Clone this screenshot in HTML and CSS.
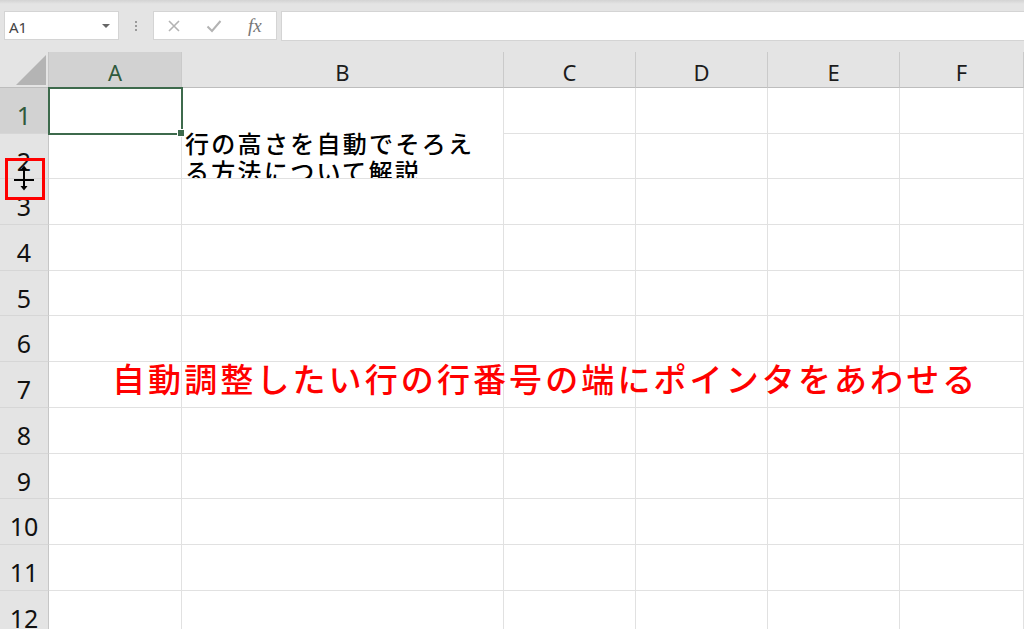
FILE: index.html
```html
<!DOCTYPE html>
<html lang="ja">
<head>
    <meta charset="UTF-8">
    <meta name="viewport" content="width=device-width, initial-scale=1.0">
    <title>行の高さを自動調整</title>
    <link rel="stylesheet" href="styles.css">
</head>
<body>
    <div class="toolbar">
        <div class="name-box">
            <span class="name-text">A1</span>
            <span class="name-arrow"></span>
        </div>
        <div class="grip">
            <span></span><span></span><span></span>
        </div>
        <div class="fx-buttons">
            <svg class="fx-icon" width="14" height="14" viewBox="0 0 14 14">
                <path d="M2 2 L12 12 M12 2 L2 12" stroke="#b3b3b3" stroke-width="1.6" fill="none"/>
            </svg>
            <svg class="fx-icon" width="16" height="14" viewBox="0 0 16 14">
                <path d="M1.5 7.5 L6 12 L14.5 2" stroke="#b3b3b3" stroke-width="2" fill="none"/>
            </svg>
            <span class="fx-label">fx</span>
        </div>
        <div class="formula-input"></div>
    </div>

    <div class="sheet">
        <div class="corner"><span class="corner-tri"></span></div>
        <div class="col-head selected">A</div>
        <div class="col-head">B</div>
        <div class="col-head">C</div>
        <div class="col-head">D</div>
        <div class="col-head">E</div>
        <div class="col-head">F</div>

        <div class="row-head selected">1</div>
        <div class="cell active"></div>
        <div class="cell"></div><div class="cell"></div><div class="cell"></div><div class="cell"></div><div class="cell"></div>

        <div class="row-head">2</div>
        <div class="cell"></div>
        <div class="cell wrap-text">行の高さを自動でそろえる方法について解説</div>
        <div class="cell"></div><div class="cell"></div><div class="cell"></div><div class="cell"></div>

        <div class="row-head">3</div>
        <div class="cell"></div><div class="cell"></div><div class="cell"></div><div class="cell"></div><div class="cell"></div><div class="cell"></div>
        <div class="row-head">4</div>
        <div class="cell"></div><div class="cell"></div><div class="cell"></div><div class="cell"></div><div class="cell"></div><div class="cell"></div>
        <div class="row-head">5</div>
        <div class="cell"></div><div class="cell"></div><div class="cell"></div><div class="cell"></div><div class="cell"></div><div class="cell"></div>
        <div class="row-head">6</div>
        <div class="cell"></div><div class="cell"></div><div class="cell"></div><div class="cell"></div><div class="cell"></div><div class="cell"></div>
        <div class="row-head">7</div>
        <div class="cell"></div><div class="cell"></div><div class="cell"></div><div class="cell"></div><div class="cell"></div><div class="cell"></div>
        <div class="row-head">8</div>
        <div class="cell"></div><div class="cell"></div><div class="cell"></div><div class="cell"></div><div class="cell"></div><div class="cell"></div>
        <div class="row-head">9</div>
        <div class="cell"></div><div class="cell"></div><div class="cell"></div><div class="cell"></div><div class="cell"></div><div class="cell"></div>
        <div class="row-head">10</div>
        <div class="cell"></div><div class="cell"></div><div class="cell"></div><div class="cell"></div><div class="cell"></div><div class="cell"></div>
        <div class="row-head">11</div>
        <div class="cell"></div><div class="cell"></div><div class="cell"></div><div class="cell"></div><div class="cell"></div><div class="cell"></div>
        <div class="row-head">12</div>
        <div class="cell"></div><div class="cell"></div><div class="cell"></div><div class="cell"></div><div class="cell"></div><div class="cell"></div>

        <!-- annotation layer -->
        <div class="pointer-box"></div>
        <svg class="resize-cursor" width="24" height="30" viewBox="0 0 24 30">
            <path d="M2 16 H22" stroke="#000" stroke-width="2"/>
            <path d="M12 3 V25" stroke="#000" stroke-width="2"/>
            <path d="M8.5 6 L12 1.5 L15.5 6 Z" fill="#000"/>
            <path d="M8.5 22 L12 26.5 L15.5 22 Z" fill="#000"/>
        </svg>
        <div class="note">自動調整したい行の行番号の端にポインタをあわせる</div>
    </div>
</body>
</html>
```

FILE: styles.css
```css
* {
    margin: 0;
    padding: 0;
    box-sizing: border-box;
}

body {
    font-family: "Noto Sans", "Noto Sans CJK JP", sans-serif;
    background: #ffffff;
    overflow: hidden;
    width: 1024px;
    height: 629px;
}

/* formula bar */
.toolbar {
    height: 52px;
    display: flex;
    align-items: flex-start;
    padding: 11px 0 0 4px;
    background: linear-gradient(#d3d3d3, #e4e4e4 4px);
}

.name-box {
    width: 115px;
    height: 29px;
    background: #ffffff;
    border: 1px solid #d4d4d4;
    display: flex;
    align-items: center;
    justify-content: space-between;
    padding: 0 8px 0 4px;
}

.name-text {
    font-size: 15px;
    color: #444;
    padding-top: 3px;
}

.name-arrow {
    width: 0;
    height: 0;
    border-left: 4px solid transparent;
    border-right: 4px solid transparent;
    border-top: 4px solid #666;
}

.grip {
    width: 34px;
    height: 29px;
    display: flex;
    flex-direction: column;
    align-items: center;
    justify-content: center;
    gap: 2px;
}

.grip span {
    width: 2px;
    height: 2px;
    background: #9a9a9a;
}

.fx-buttons {
    width: 124px;
    height: 29px;
    background: #ffffff;
    border: 1px solid #d4d4d4;
    display: flex;
    align-items: center;
    padding-left: 13px;
    gap: 25px;
}

.fx-label {
    font-family: "Liberation Serif", serif;
    font-style: italic;
    font-size: 19px;
    color: #777;
    margin-left: 1px;
}

.formula-input {
    flex: 1;
    height: 30px;
    margin-left: 4px;
    background: #ffffff;
    border: 1px solid #d4d4d4;
    border-right: none;
}

/* sheet grid */
.sheet {
    position: relative;
    display: grid;
    grid-template-columns: 49px 133px 322px 132px 132px 132px 124px;
    grid-template-rows: 36px repeat(12, 45.7px);
}

.corner {
    background: #e4e4e4;
    border-right: 1px solid #c6c6c6;
    border-bottom: 1px solid #bdbdbd;
    position: relative;
}

.corner-tri {
    position: absolute;
    right: 2px;
    bottom: 2px;
    width: 0;
    height: 0;
    border-left: 30px solid transparent;
    border-bottom: 30px solid #b4b4b4;
}

.col-head {
    background: #e4e4e4;
    border-right: 1px solid #cacaca;
    border-bottom: 1px solid #bdbdbd;
    font-size: 22px;
    color: #1c1c1c;
    display: flex;
    align-items: center;
    justify-content: center;
    padding-top: 4px;
}

.row-head {
    background: #e4e4e4;
    border-right: 1px solid #c6c6c6;
    border-bottom: 1px solid #d6d6d6;
    font-size: 25px;
    color: #111;
    text-align: center;
    line-height: 1;
    padding-top: 15px;
}

.col-head.selected,
.row-head.selected {
    background: #d2d2d2;
    color: #2f5a3d;
}

.cell {
    border-right: 1px solid #e1e1e1;
    border-bottom: 1px solid #e1e1e1;
    background: #ffffff;
}

.cell.active {
    position: relative;
    outline: 2px solid #3d6a4c;
    outline-offset: -1px;
    z-index: 1;
}

.cell.active::after {
    content: "";
    position: absolute;
    right: -4px;
    bottom: -4px;
    width: 6px;
    height: 6px;
    background: #3d6a4c;
    border: 1px solid #ffffff;
}

.wrap-text {
    overflow: hidden;
    font-family: "Noto Sans CJK JP", sans-serif;
    font-weight: 500;
    font-size: 24px;
    letter-spacing: 2.3px;
    line-height: 28px;
    color: #000;
    padding: 0 22px 0 3px;
    margin-top: -5px;
}

/* annotation overlay */
.pointer-box {
    position: absolute;
    left: 5px;
    top: 106px;
    width: 40px;
    height: 42px;
    border: 3px solid #ff0000;
    z-index: 2;
}

.resize-cursor {
    position: absolute;
    left: 12px;
    top: 112px;
    z-index: 3;
}

.note {
    position: absolute;
    left: 112px;
    top: 310px;
    font-family: "Noto Sans CJK JP", sans-serif;
    font-weight: 500;
    font-size: 33px;
    line-height: 33px;
    letter-spacing: 3.1px;
    color: #ff0000;
    white-space: nowrap;
    z-index: 2;
}
```
